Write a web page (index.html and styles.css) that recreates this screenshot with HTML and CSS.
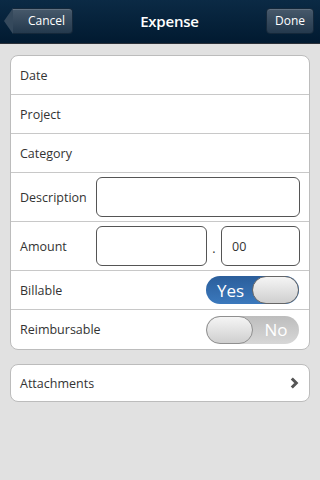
FILE: index.html
```html
<!DOCTYPE html>
<html lang="en">
<head>
  <meta charset="UTF-8">
  <meta name="viewport" content="width=device-width, initial-scale=1.0">
  <title>Expense</title>
  <link rel="stylesheet" href="styles.css">
</head>
<body>
  <div class="header">
    <a class="btn back">Cancel</a>
    <h1>Expense</h1>
    <a class="btn">Done</a>
  </div>

  <div class="content">
    <ul class="list">
      <li class="row">Date</li>
      <li class="row">Project</li>
      <li class="row">Category</li>
      <li class="row tall">
        <span class="label">Description</span>
        <span class="field wide"></span>
      </li>
      <li class="row tall">
        <span class="label">Amount</span>
        <span class="field"></span>
        <span class="dot">.</span>
        <span class="field cents">00</span>
      </li>
      <li class="row">
        <span class="label">Billable</span>
        <span class="toggle on"><span class="text">Yes</span><span class="knob"></span></span>
      </li>
      <li class="row">
        <span class="label">Reimbursable</span>
        <span class="toggle"><span class="knob"></span><span class="text">No</span></span>
      </li>
    </ul>

    <ul class="list">
      <li class="row link">
        <span class="label">Attachments</span>
        <svg class="chevron" width="9" height="12" viewBox="0 0 9 12"><path d="M1.8 1.5 L6.3 6 L1.8 10.5" fill="none" stroke="#555" stroke-width="3"/></svg>
      </li>
    </ul>
  </div>
</body>
</html>
```

FILE: styles.css
```css
*{
	box-sizing: border-box;
}
body{
	margin: 0;
	background-color: #e1e1e1;
	font-family: "Open Sans", "Noto Sans", sans-serif;
	color: #333;
	height: 480px;
}
.header{
	height: 44px;
	background: linear-gradient(#0b2a45, #011a30);
	border-bottom: 1px solid #2b3038;
	display: flex;
	align-items: center;
	justify-content: space-between;
	padding: 0 6px 1px 5px;
}
.header h1{
	margin: 0;
	color: #fff;
	font-size: 15px;
	font-weight: 600;
	letter-spacing: -0.2px;
}
.btn{
	height: 26px;
	line-height: 24px;
	padding: 0 8px;
	font-size: 12px;
	color: #fff;
	border: 1px solid #15283a;
	border-radius: 4px;
	background: linear-gradient(#47596b, #24394d);
	box-shadow: inset 0 1px 0 rgba(255,255,255,0.15);
}
.btn.back{
	position: relative;
	width: 60px;
	padding-left: 15px;
	border-left: none;
	border-radius: 0 4px 4px 0;
	margin-left: 8px;
	margin-right: 0;
}
.btn.back::before{
	content: "";
	position: absolute;
	left: -9px;
	top: -1px;
	width: 0;
	height: 0;
	border-top: 13px solid transparent;
	border-bottom: 13px solid transparent;
	border-right: 9px solid #35495c;
}
.content{
	padding: 11px 10px;
}
.list{
	list-style: none;
	margin: 0 0 14px 0;
	padding: 0;
	background-color: #fff;
	border: 1px solid #bcbcbc;
	border-radius: 8px;
}
.row{
	height: 39px;
	display: flex;
	align-items: center;
	padding: 0 9px;
	font-size: 12.5px;
	border-bottom: 1px solid #c8c8c8;
}
.row:last-child{
	border-bottom: none;
}
.row.tall{
	height: 49px;
}
.label{
	width: 76px;
	flex-shrink: 0;
}
.field{
	height: 40px;
	width: 111px;
	border: 1px solid #555;
	border-radius: 6px;
	background-color: #fff;
	display: flex;
	align-items: center;
	padding-left: 10px;
	font-size: 12.5px;
}
.field.wide{
	width: 204px;
}
.field.cents{
	width: 79px;
}
.dot{
	width: 14px;
	text-align: center;
	padding-top: 4px;
}
.toggle{
	margin-left: auto;
	width: 93px;
	height: 28px;
	border-radius: 14px;
	display: flex;
	align-items: center;
	background: linear-gradient(#bdbdbd, #d7d7d7);
	color: #fff;
	font-size: 17px;
	overflow: hidden;
	margin-right: 1px;
}
.toggle.on{
	background: linear-gradient(#2b5e9b, #3b79bd);
}
.toggle .text{
	flex: 1;
	text-align: center;
}
.toggle.on .text{
	padding-left: 3px;
}
.knob{
	width: 47px;
	height: 28px;
	border-radius: 14px;
	border: 1px solid #8f8f8f;
	background: linear-gradient(#f5f5f5, #cfcfcf);
}
.toggle.on .knob{
	border-color: #666;
}
.chevron{
	margin-left: auto;
	margin-right: 1px;
}
.row.link{
	height: 36px;
}
```
